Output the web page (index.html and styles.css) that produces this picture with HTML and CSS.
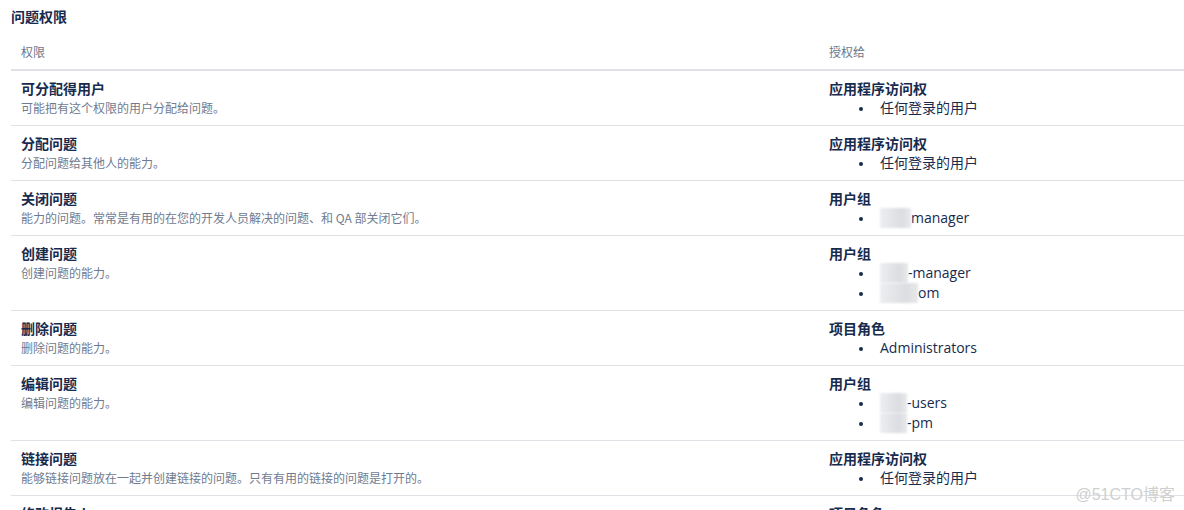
FILE: index.html
```html
<!DOCTYPE html>
<html lang="zh">
<head>
<meta charset="utf-8">
<title>问题权限</title>
<link rel="stylesheet" href="styles.css">
</head>
<body>
<div class="page">
  <h2 class="title">问题权限</h2>
  <table class="perm">
    <colgroup><col class="c-perm"><col class="c-grant"></colgroup>
    <thead>
      <tr><th>权限</th><th>授权给</th></tr>
    </thead>
    <tbody>
      <tr>
        <td><div class="name">可分配得用户</div><div class="desc">可能把有这个权限的用户分配给问题。</div></td>
        <td><div class="type">应用程序访问权</div><ul class="list"><li>任何登录的用户</li></ul></td>
      </tr>
      <tr>
        <td><div class="name">分配问题</div><div class="desc">分配问题给其他人的能力。</div></td>
        <td><div class="type">应用程序访问权</div><ul class="list"><li>任何登录的用户</li></ul></td>
      </tr>
      <tr>
        <td><div class="name">关闭问题</div><div class="desc">能力的问题。常常是有用的在您的开发人员解决的问题、和 QA 部关闭它们。</div></td>
        <td><div class="type">用户组</div><ul class="list"><li><span class="blur b1"></span>manager</li></ul></td>
      </tr>
      <tr>
        <td><div class="name">创建问题</div><div class="desc">创建问题的能力。</div></td>
        <td><div class="type">用户组</div><ul class="list"><li><span class="blur b2"></span>-manager</li><li><span class="blur b3"></span>om</li></ul></td>
      </tr>
      <tr>
        <td><div class="name">删除问题</div><div class="desc">删除问题的能力。</div></td>
        <td><div class="type">项目角色</div><ul class="list"><li>Administrators</li></ul></td>
      </tr>
      <tr>
        <td><div class="name">编辑问题</div><div class="desc">编辑问题的能力。</div></td>
        <td><div class="type">用户组</div><ul class="list"><li><span class="blur b4"></span>-users</li><li><span class="blur b4"></span>-pm</li></ul></td>
      </tr>
      <tr>
        <td><div class="name">链接问题</div><div class="desc">能够链接问题放在一起并创建链接的问题。只有有用的链接的问题是打开的。</div></td>
        <td><div class="type">应用程序访问权</div><ul class="list"><li>任何登录的用户</li></ul></td>
      </tr>
      <tr>
        <td><div class="name">修改报告人</div><div class="desc">修改报告人的能力。</div></td>
        <td><div class="type">项目角色</div><ul class="list"><li>Administrators</li></ul></td>
      </tr>
    </tbody>
  </table>
</div>
<div class="watermark">@51CTO博客</div>
</body>
</html>
```

FILE: styles.css
```css
html, body {
  margin: 0;
  padding: 0;
  background: #ffffff;
  overflow: hidden;
}
body {
  font-family: "Open Sans", "Noto Sans CJK SC", sans-serif;
  color: #172b4d;
  font-size: 14px;
  width: 1184px;
  height: 510px;
  position: relative;
}
.page {
  padding: 6px 0 0 11px;
}
.title {
  margin: 0 0 9px 0;
  font-size: 14px;
  line-height: 20px;
  font-weight: 700;
  font-family: "Noto Sans CJK SC", sans-serif;
  color: #172b4d;
}
.perm {
  width: 1200px;
  border-collapse: collapse;
  table-layout: fixed;
}
.c-perm { width: 808px; }
.c-grant { width: 392px; }
.perm th {
  text-align: left;
  font-weight: 400;
  font-size: 12px;
  line-height: 20px;
  color: #6b778c;
  padding: 7px 10px 7px 10px;
  border-bottom: 2px solid #dfe1e6;
  font-family: "Noto Sans CJK SC", sans-serif;
}
.perm td {
  vertical-align: top;
  padding: 7px 10px 7px 10px;
  border-bottom: 1px solid #dfe1e6;
}
.name, .type {
  font-weight: 700;
  font-size: 14px;
  line-height: 20px;
  font-family: "Noto Sans CJK SC", sans-serif;
  color: #172b4d;
}
.desc {
  font-size: 12px;
  line-height: 20px;
  color: #707b8f;
  font-family: "Noto Sans CJK SC", sans-serif;
}
.list {
  list-style: none;
  margin: 0;
  padding: 0 0 0 51px;
}
.list li {
  position: relative;
  line-height: 20px;
  font-size: 14px;
  color: #172b4d;
  font-family: "Open Sans", "Noto Sans CJK SC", sans-serif;
  display: flex;
  align-items: center;
}
.list li::before {
  content: "";
  position: absolute;
  left: -21px;
  top: 9px;
  width: 4px;
  height: 4px;
  border-radius: 50%;
  background: #172b4d;
}
.blur {
  display: inline-block;
  height: 20px;
  background: linear-gradient(90deg, #eceef0 0%, #e3e4e7 40%, #dcdde0 70%, #e8e9eb 100%);
  filter: blur(0.8px);
}
.b1 { width: 31px; }
.b2 { width: 28px; }
.b3 { width: 38px; }
.b4 { width: 27px; }
.watermark {
  position: absolute;
  right: 9px;
  bottom: 5px;
  font-size: 16px;
  line-height: 20px;
  color: #cfcfcf;
  font-family: "Liberation Sans", "Noto Sans CJK SC", sans-serif;
}
```
